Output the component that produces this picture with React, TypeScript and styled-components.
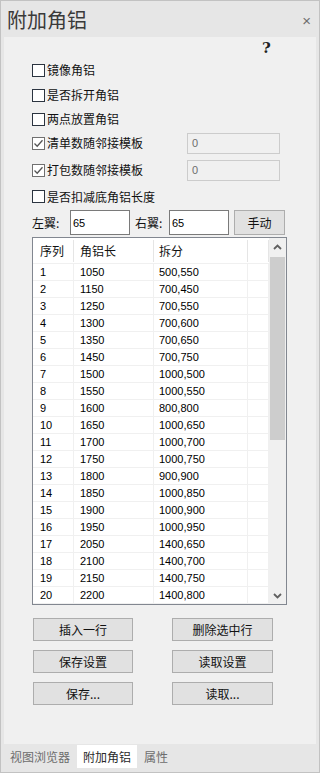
import React from "react";
import styled, { createGlobalStyle } from "styled-components";

const Global = createGlobalStyle`
  html, body { margin: 0; padding: 0; background: #ffffff; }
  * { box-sizing: border-box; }
`;

const FONT = `"Liberation Sans", "Noto Sans CJK SC", sans-serif`;
const CJK = `"Noto Sans CJK SC", "Liberation Sans", sans-serif`;

const Frame = styled.div`
  width: 320px;
  height: 773px;
  background: #e6e6e6;
  border: 1px solid #c2c2c2;
  display: flex;
  flex-direction: column;
  font-family: ${CJK};
  color: #1a1a1a;
  overflow: hidden;
`;

const TitleBar = styled.div`
  height: 36px;
  flex: none;
  display: flex;
  align-items: center;
  justify-content: space-between;
  padding: 0 8px 0 6px;
`;

const Title = styled.div`
  font-size: 20px;
  line-height: 24px;
  color: #3a3a3a;
  font-family: ${CJK};
  margin-top: 1px;
`;

const Close = styled.div`
  font-size: 15px;
  color: #6e6e6e;
  font-family: ${FONT};
  line-height: 15px;
  margin-top: 3px;
`;

const Panel = styled.div`
  flex: 1;
  margin: 0 3px;
  background: #f0f0f0;
  display: flex;
  flex-direction: column;
  padding: 0 29px 0 28px;
`;

const HelpRow = styled.div`
  height: 21px;
  display: flex;
  align-items: center;
  padding-left: 230px;
`;

const Help = styled.span`
  font-family: "DejaVu Serif", "Liberation Serif", serif;
  font-weight: bold;
  font-size: 15px;
  line-height: 15px;
  color: #222;
  margin-top: 2px;
`;

const CheckRow = styled.div<{ $h: number }>`
  height: ${(p) => p.$h}px;
  display: grid;
  grid-template-columns: 155px 93px;
  align-items: center;
`;

const CheckLabel = styled.label`
  display: flex;
  align-items: center;
  font-size: 12px;
  line-height: 14px;
  color: #111;
  font-family: ${CJK};
`;

const Box = styled.span<{ $checked?: boolean }>`
  width: 13px;
  height: 13px;
  border: 1px solid ${(p) => (p.$checked ? "#707070" : "#2b3440")};
  background: #fff;
  margin-right: 2px;
  display: inline-flex;
  align-items: center;
  justify-content: center;
  flex: none;
`;

const DisabledInput = styled.div`
  height: 21px;
  border: 1px solid #cccccc;
  background: #f0f0f0;
  font-family: ${FONT};
  font-size: 11px;
  color: #6d6d6d;
  display: flex;
  align-items: center;
  padding-left: 4px;
`;

const WingRow = styled.div`
  height: 25px;
  display: flex;
  align-items: center;
  margin-top: 1px;
`;

const WingLabel = styled.span<{ $w: number; $ml?: number }>`
  width: ${(p) => p.$w}px;
  margin-left: ${(p) => p.$ml ?? 0}px;
  font-size: 12px;
  color: #111;
  font-family: ${CJK};
  flex: none;
`;

const TextInput = styled.div`
  width: 60px;
  height: 25px;
  border: 1px solid #7a7a7a;
  background: #fff;
  font-family: ${FONT};
  font-size: 11px;
  color: #000;
  display: flex;
  align-items: center;
  padding-left: 2px;
  flex: none;
`;

const Button = styled.div`
  height: 23px;
  border: 1px solid #adadad;
  background: #e1e1e1;
  font-size: 12px;
  color: #111;
  font-family: ${CJK};
  display: flex;
  align-items: center;
  justify-content: center;
`;

const SmallButton = styled(Button)`
  width: 51px;
  height: 25px;
  margin-left: 5px;
  flex: none;
`;

const Table = styled.div`
  margin-top: 2px;
  width: 255px;
  height: 368px;
  border: 1px solid #828790;
  background: #fff;
  display: flex;
`;

const ListArea = styled.div`
  width: 236px;
  display: flex;
  flex-direction: column;
`;

const COLS = "41px 80px 94px 21px";

const HeaderRow = styled.div`
  height: 26px;
  display: grid;
  grid-template-columns: ${COLS};
  border-bottom: 1px solid #f0f0f0;
`;

const HeaderCell = styled.div<{ $pl: number }>`
  display: flex;
  align-items: center;
  padding-left: ${(p) => p.$pl}px;
  font-size: 12px;
  color: #111;
  font-family: ${CJK};
  position: relative;
  &::after {
    content: "";
    position: absolute;
    right: 0;
    top: 2px;
    bottom: 1px;
    width: 1px;
    background: #e5e5e5;
  }
`;

const Row = styled.div`
  height: 17px;
  display: grid;
  grid-template-columns: ${COLS};
  border-bottom: 1px solid #f0f0f0;
`;

const Cell = styled.div<{ $pl: number }>`
  display: flex;
  align-items: center;
  padding-left: ${(p) => p.$pl}px;
  font-size: 11px;
  font-family: ${FONT};
  color: #000;
  border-right: 1px solid #f0f0f0;
  line-height: 16px;
`;

const ScrollBar = styled.div`
  width: 17px;
  background: #f0f0f0;
  display: flex;
  flex-direction: column;
`;

const ScrollBtn = styled.div`
  height: 17px;
  display: flex;
  align-items: center;
  justify-content: center;
  flex: none;
`;

const Track = styled.div`
  flex: 1;
  padding: 2px 1px 0 1px;
`;

const Thumb = styled.div`
  height: 183px;
  background: #cdcdcd;
`;

const ButtonGrid = styled.div`
  margin-top: 13px;
  margin-left: 1px;
  display: grid;
  grid-template-columns: 100px 101px;
  column-gap: 39px;
  row-gap: 9px;
`;

const TabBar = styled.div`
  height: 28px;
  flex: none;
  display: flex;
  align-items: flex-start;
  padding-left: 3px;
  gap: 1px;
`;

const Tab = styled.div<{ $active?: boolean }>`
  margin-top: 1px;
  height: 23px;
  padding: 0 6px;
  display: flex;
  align-items: center;
  font-size: 12px;
  font-family: ${CJK};
  background: ${(p) => (p.$active ? "#ffffff" : "transparent")};
  color: ${(p) => (p.$active ? "#2a2a2a" : "#6d6d6d")};
`;

const Check = () => (
  <svg width="11" height="11" viewBox="0 0 11 11">
    <path d="M1.5 5.5 L4.2 8.2 L9.5 2.2" fill="none" stroke="#555" strokeWidth="1.3" />
  </svg>
);

const Chevron = ({ up }: { up?: boolean }) => (
  <svg width="9" height="6" viewBox="0 0 9 6">
    <path
      d={up ? "M1 5 L4.5 1.5 L8 5" : "M1 1 L4.5 4.5 L8 1"}
      fill="none"
      stroke="#606060"
      strokeWidth="1.8"
    />
  </svg>
);

const rows: [number, number, string][] = [
  [1, 1050, "500,550"],
  [2, 1150, "700,450"],
  [3, 1250, "700,550"],
  [4, 1300, "700,600"],
  [5, 1350, "700,650"],
  [6, 1450, "700,750"],
  [7, 1500, "1000,500"],
  [8, 1550, "1000,550"],
  [9, 1600, "800,800"],
  [10, 1650, "1000,650"],
  [11, 1700, "1000,700"],
  [12, 1750, "1000,750"],
  [13, 1800, "900,900"],
  [14, 1850, "1000,850"],
  [15, 1900, "1000,900"],
  [16, 1950, "1000,950"],
  [17, 2050, "1400,650"],
  [18, 2100, "1400,700"],
  [19, 2150, "1400,750"],
  [20, 2200, "1400,800"],
];

const checks: { label: string; checked?: boolean; h: number; input?: boolean }[] = [
  { label: "镜像角铝", h: 24 },
  { label: "是否拆开角铝", h: 26 },
  { label: "两点放置角铝", h: 22 },
  { label: "清单数随邻接模板", checked: true, h: 26, input: true },
  { label: "打包数随邻接模板", checked: true, h: 28, input: true },
  { label: "是否扣减底角铝长度", h: 25 },
];

export default function App() {
  return (
    <>
      <Global />
      <Frame>
        <TitleBar>
          <Title>附加角铝</Title>
          <Close>×</Close>
        </TitleBar>
        <Panel>
          <HelpRow>
            <Help>?</Help>
          </HelpRow>
          {checks.map((c) => (
            <CheckRow key={c.label} $h={c.h}>
              <CheckLabel>
                <Box $checked={c.checked}>{c.checked && <Check />}</Box>
                {c.label}
              </CheckLabel>
              {c.input && <DisabledInput>0</DisabledInput>}
            </CheckRow>
          ))}
          <WingRow>
            <WingLabel $w={38}>左翼:</WingLabel>
            <TextInput>65</TextInput>
            <WingLabel $w={34} $ml={5}>右翼:</WingLabel>
            <TextInput>65</TextInput>
            <SmallButton>手动</SmallButton>
          </WingRow>
          <Table>
            <ListArea>
              <HeaderRow>
                <HeaderCell $pl={7}>序列</HeaderCell>
                <HeaderCell $pl={6}>角铝长</HeaderCell>
                <HeaderCell $pl={5}>拆分</HeaderCell>
                <HeaderCell $pl={0} />
              </HeaderRow>
              {rows.map(([n, len, split]) => (
                <Row key={n}>
                  <Cell $pl={7}>{n}</Cell>
                  <Cell $pl={6}>{len}</Cell>
                  <Cell $pl={5}>{split}</Cell>
                  <Cell $pl={0} />
                </Row>
              ))}
            </ListArea>
            <ScrollBar>
              <ScrollBtn>
                <Chevron up />
              </ScrollBtn>
              <Track>
                <Thumb />
              </Track>
              <ScrollBtn>
                <Chevron />
              </ScrollBtn>
            </ScrollBar>
          </Table>
          <ButtonGrid>
            <Button>插入一行</Button>
            <Button>删除选中行</Button>
            <Button>保存设置</Button>
            <Button>读取设置</Button>
            <Button>保存...</Button>
            <Button>读取...</Button>
          </ButtonGrid>
        </Panel>
        <TabBar>
          <Tab>视图浏览器</Tab>
          <Tab $active>附加角铝</Tab>
          <Tab>属性</Tab>
        </TabBar>
      </Frame>
    </>
  );
}
